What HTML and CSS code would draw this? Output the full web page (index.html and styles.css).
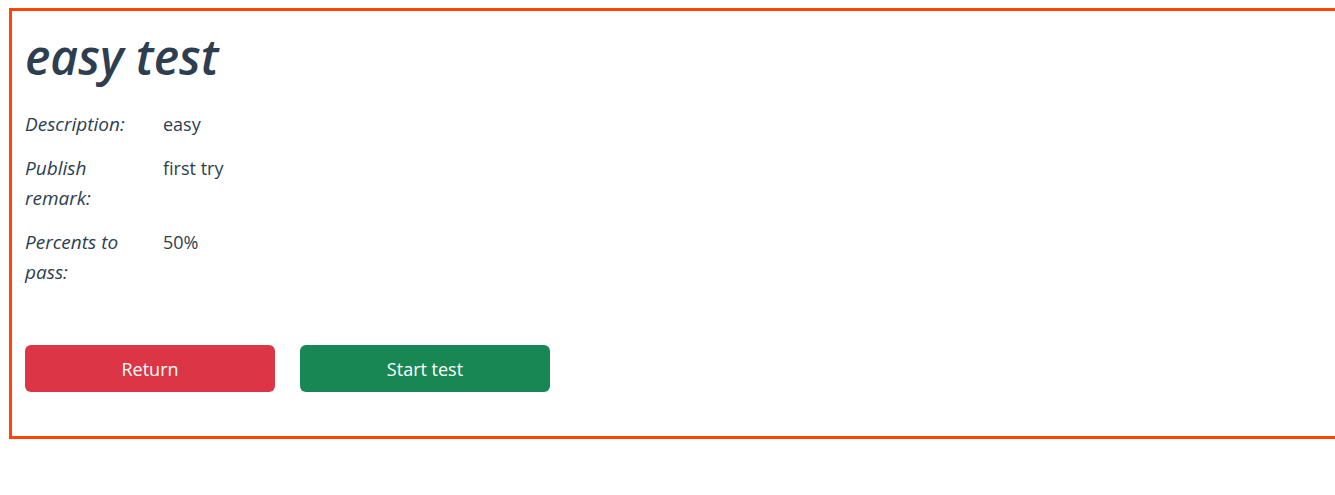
FILE: index.html
```html
<!DOCTYPE html>
<html>
<head>
<meta charset="utf-8">
<link rel="stylesheet" href="styles.css">
</head>
<body>
<div class="card">
  <h1 class="title">easy test</h1>
  <div class="info">
    <div class="row"><div class="label">Description:</div><div class="value">easy</div></div>
    <div class="row"><div class="label">Publish remark:</div><div class="value">first try</div></div>
    <div class="row"><div class="label">Percents to pass:</div><div class="value">50%</div></div>
  </div>
  <div class="actions">
    <button class="btn btn-red">Return</button>
    <button class="btn btn-green">Start test</button>
  </div>
</div>
</body>
</html>
```
FILE: styles.css
```css
html, body { margin: 0; padding: 0; background: #fff; }
body {
  font-family: "Open Sans", "Noto Sans", sans-serif;
  color: #2c3e50;
  padding: 8px 0 0 9px;
}
.card {
  border: 3px solid #ff4500;
  border-right: none;
  width: 100%;
  height: 431px;
  box-sizing: border-box;
  padding: 14px 14px 14px 13px;
}
.title {
  margin: 0 0 20px 0;
  font-size: 48px;
  font-weight: 600;
  font-style: italic;
  line-height: 64px;
}
.info { display: flex; flex-direction: column; gap: 14px; }
.row { display: flex; font-size: 18px; line-height: 30px; }
.label { width: 138px; font-style: italic; font-size: 19px; padding-right: 20px; box-sizing: border-box; }
.value { }
.actions { display: flex; gap: 25px; margin-top: 58px; }
.btn {
  width: 250px; height: 47px;
  border: none; border-radius: 6px;
  color: #fff; font-family: inherit; font-size: 18px;
}
.btn-red { background: #dc3545; }
.btn-green { background: #198754; }
```
